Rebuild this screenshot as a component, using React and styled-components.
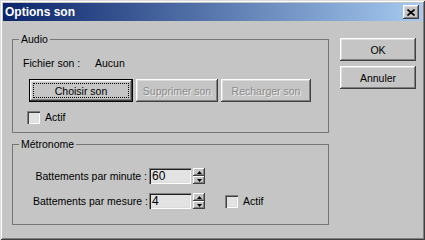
import React from 'react'
import styled, {createGlobalStyle} from 'styled-components'

const FACE = '#c5c5c5';
const LINE = '#767676';

const GlobalStyle = createGlobalStyle`
    html, body {
        margin: 0;
        padding: 0;
        background: ${FACE};
    }
    body {
        font-family: "Liberation Sans", Arial, sans-serif;
        font-size: 10.5px;
        color: #000;
    }
`;

const Window = styled.div`
    box-sizing: border-box;
    width: 425px;
    height: 240px;
    padding: 3px;
    background: ${FACE};
    box-shadow: inset 1px 1px #dcdcdc, inset -1px -1px #404040, inset 2px 2px #fff, inset -2px -2px #808080;
    display: flex;
    flex-direction: column;
`;

const TitleBar = styled.div`
    height: 18px;
    display: flex;
    align-items: center;
    justify-content: space-between;
    padding: 0 3px 0 2px;
    background: linear-gradient(to right, #0a246a, #a6caf0);
`;

const TitleText = styled.span`
    color: #fff;
    font-weight: bold;
    font-size: 12px;
    line-height: 14px;
`;

const CloseButton = styled.div`
    box-sizing: border-box;
    width: 16px;
    height: 14px;
    background: ${FACE};
    box-shadow: inset -1px -1px #404040, inset 1px 1px #fff, inset -2px -2px #808080, inset 2px 2px #dcdcdc;
    display: flex;
    align-items: center;
    justify-content: center;
    svg {
        display: block;
    }
`;

const Body = styled.div`
    display: flex;
    align-items: flex-start;
    padding: 17px 6px 0 9px;
    gap: 11px;
    white-space: nowrap;
`;

const LeftColumn = styled.div`
    width: 318px;
    display: flex;
    flex-direction: column;
    gap: 11px;
    padding-top: 1px;
`;

const RightColumn = styled.div`
    display: flex;
    flex-direction: column;
    gap: 5px;
`;

const Group = styled.section`
    position: relative;
    box-sizing: border-box;
    border: 1px solid ${LINE};
    padding: ${p => p.$pad};
`;

const Legend = styled.span`
    position: absolute;
    top: -7px;
    left: 6px;
    padding: 0 2px;
    line-height: 13px;
    background: ${FACE};
`;

const InfoRow = styled.div`
    display: flex;
    line-height: 13px;
    padding-left: 10px;
`;

const InfoLabel = styled.span`
    width: 72px;
`;

const ButtonRow = styled.div`
    display: flex;
    gap: 3px;
    margin: 9px 0 9px 16px;
`;

const Button = styled.button`
    position: relative;
    box-sizing: border-box;
    width: ${p => p.$w}px;
    height: 23px;
    margin: 0;
    padding: 0;
    font-family: inherit;
    font-size: 10.5px;
    color: #000;
    background: ${FACE};
    border: ${p => p.$default ? '1px solid #000' : 'none'};
    box-shadow: inset -1px -1px #404040, inset 1px 1px #fff, inset -2px -2px #808080, inset 2px 2px #dcdcdc;
    &:disabled {
        color: #8c8c8c;
        text-shadow: 1px 1px #ececec;
    }
    ${p => p.$default && `
        &::after {
            content: '';
            position: absolute;
            inset: 3px;
            border: 1px dotted #000;
        }
    `}
`;

const CheckRow = styled.label`
    display: flex;
    align-items: center;
    gap: 5px;
    line-height: 13px;
    margin-left: ${p => p.$left || 0}px;
`;

const CheckBox = styled.span`
    box-sizing: border-box;
    width: 13px;
    height: 13px;
    background: #e2e2e2;
    box-shadow: inset 1px 1px #808080, inset 2px 2px #404040, inset -1px -1px #fff, inset -2px -2px #dcdcdc;
`;

const MetroRow = styled.div`
    display: flex;
    align-items: center;
    & + & {
        margin-top: 9px;
    }
`;

const MetroLabel = styled.span`
    width: 114px;
    text-align: right;
    margin-right: 2px;
    line-height: 13px;
`;

const NumberBox = styled.div`
    box-sizing: border-box;
    width: 42px;
    height: 16px;
    padding: 2px 0 0 3px;
    line-height: 12px;
    font-size: 12px;
    background: #e3e3e3;
    box-shadow: inset 1px 1px #808080, inset 2px 2px #202020, inset -1px -1px #fff, inset -2px -2px #dcdcdc;
`;

const Spinner = styled.div`
    display: flex;
    flex-direction: column;
    margin-left: 2px;
`;

const SpinHalf = styled.div`
    box-sizing: border-box;
    width: 12px;
    height: 8px;
    display: flex;
    align-items: center;
    justify-content: center;
    box-shadow: inset -1px -1px #404040, inset 1px 1px #fff, inset -2px -2px #808080;
    svg {
        display: block;
    }
`;

const Arrow = ({down}) => (
    <svg width="5" height="3" viewBox="0 0 5 3">
        <polygon points={down ? '0,0 5,0 2.5,3' : '0,3 5,3 2.5,0'} fill="#000"/>
    </svg>
);

const NumberField = ({value}) => (
    <>
        <NumberBox>{value}</NumberBox>
        <Spinner>
            <SpinHalf><Arrow/></SpinHalf>
            <SpinHalf><Arrow down/></SpinHalf>
        </Spinner>
    </>
);

const App = () => {
    return <>
        <GlobalStyle/>
        <Window>
            <TitleBar>
                <TitleText>Options son</TitleText>
                <CloseButton>
                    <svg width="8" height="7" viewBox="0 0 8 7">
                        <path d="M0.5 0.5 L7.5 6.5 M7.5 0.5 L0.5 6.5" stroke="#000" strokeWidth="1.6"/>
                    </svg>
                </CloseButton>
            </TitleBar>
            <Body>
                <LeftColumn>
                    <Group $pad="17px 0 8px 0">
                        <Legend>Audio</Legend>
                        <InfoRow>
                            <InfoLabel>Fichier son :</InfoLabel>
                            <span>Aucun</span>
                        </InfoRow>
                        <ButtonRow>
                            <Button $w={104} $default>Choisir son</Button>
                            <Button $w={82} disabled>Supprimer son</Button>
                            <Button $w={90} disabled>Recharger son</Button>
                        </ButtonRow>
                        <CheckRow $left={14}>
                            <CheckBox/>
                            Actif
                        </CheckRow>
                    </Group>
                    <Group $pad="23px 0 15px 20px">
                        <Legend>Métronome</Legend>
                        <MetroRow>
                            <MetroLabel>Battements par minute :</MetroLabel>
                            <NumberField value="60"/>
                        </MetroRow>
                        <MetroRow>
                            <MetroLabel>Battements par mesure :</MetroLabel>
                            <NumberField value="4"/>
                            <CheckRow $left={20}>
                                <CheckBox/>
                                Actif
                            </CheckRow>
                        </MetroRow>
                    </Group>
                </LeftColumn>
                <RightColumn>
                    <Button $w={76}>OK</Button>
                    <Button $w={76}>Annuler</Button>
                </RightColumn>
            </Body>
        </Window>
    </>
};

export default App;
